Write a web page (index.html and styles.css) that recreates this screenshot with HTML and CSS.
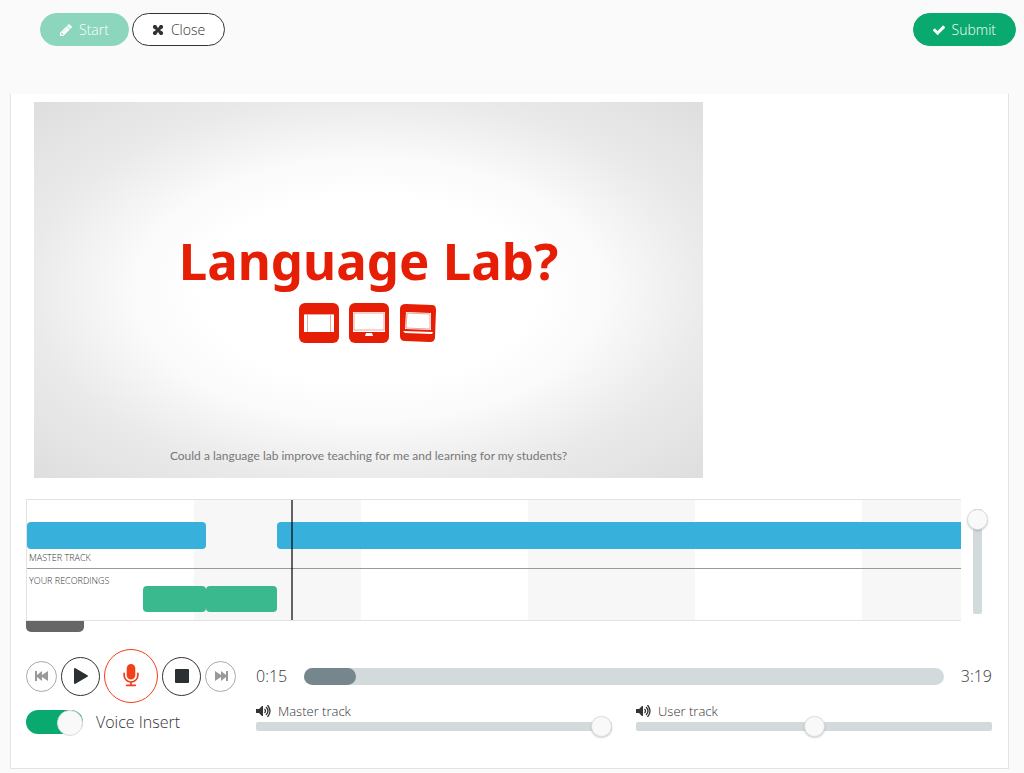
FILE: index.html
```html
<!DOCTYPE html>
<html lang="en">
<head>
  <meta charset="UTF-8">
  <meta name="viewport" content="width=device-width, initial-scale=1.0">
  <title>Language Lab</title>
  <link rel="stylesheet" href="styles.css">
</head>
<body>
  <header class="toolbar">
    <button type="button" class="btn btn-start" disabled>
      <svg class="icon" viewBox="0 0 1792 1792"><path d="M491 1536l91-91-235-235-91 91v107h128v128h107zm523-928q0-22-22-22-10 0-17 7l-542 542q-7 7-7 17 0 22 22 22 10 0 17-7l542-542q7-7 7-17zm-54-192l416 416-832 832h-416v-416zm683 96q0 53-37 90l-166 166-416-416 166-165q36-38 90-38 53 0 91 38l235 234q37 39 37 91z"/></svg>
      Start
    </button>
    <button type="button" class="btn btn-close">
      <svg class="icon" viewBox="0 0 14 14"><path d="M3 2h2l2 3 2-3h2l1 1v2L9 7l3 2v2l-1 1H9L7 9l-2 3H3l-1-1V9l3-2-3-2V3z"/></svg>
      Close
    </button>
    <button type="button" class="btn btn-submit">
      <svg class="icon" viewBox="0 0 1792 1792"><path d="M1671 566q0 40-28 68l-724 724-136 136q-28 28-68 28t-68-28l-136-136-362-362q-28-28-28-68t28-68l136-136q28-28 68-28t68 28l294 295 656-657q28-28 68-28t68 28l136 136q28 28 28 68z"/></svg>
      Submit
    </button>
  </header>

  <main class="panel">
    <section class="video">
      <h1>Language Lab?</h1>
      <div class="devices">
        <svg viewBox="0 0 40 40">
          <rect width="40" height="40" rx="6" fill="#e61e05"/>
          <rect x="5" y="11" width="30" height="18" fill="#fff"/>
          <path d="M8.5 11v18M31.5 11v18M5 11.5h30" stroke="#eba79d" fill="none"/>
        </svg>
        <svg viewBox="0 0 40 40">
          <rect width="40" height="40" rx="6" fill="#e61e05"/>
          <rect x="4" y="9" width="32" height="20" fill="#fff"/>
          <rect x="5" y="10" width="30" height="17" fill="none" stroke="#eba79d"/>
          <path d="M17 30h6l1 3h-8z" fill="#fff"/>
        </svg>
        <svg viewBox="0 0 40 40">
          <path d="M7 1l26 1q4 0 4 5l-1 27q0 5-5 5L6 38q-5 0-5-5V6q0-5 6-5z" fill="#e61e05"/>
          <path d="M7 9l25 1v17L6 26z" fill="#fff"/>
          <path d="M8 10l23 1v15L7 25z" fill="none" stroke="#eba79d"/>
          <path d="M4 28l30 1-1 2-27-1z" fill="#fff"/>
        </svg>
      </div>
      <p>Could a language lab improve teaching for me and learning for my students?</p>
    </section>

    <section class="timeline-row">
      <div class="timeline-box">
        <div class="timeline">
          <div class="lane lane-master">
            <div class="clips">
              <div class="clip" style="width: 19.2%"></div>
              <div class="clip clip-open" style="margin-left: 7.6%"></div>
            </div>
            <span class="lane-name">MASTER TRACK</span>
          </div>
          <div class="lane lane-user">
            <span class="lane-name">YOUR RECORDINGS</span>
            <div class="clips">
              <div class="clip" style="margin-left: 12.4%; width: 6.8%"></div>
              <div class="clip" style="width: 7.6%"></div>
            </div>
          </div>
          <div class="playhead" style="left: 28.3%"></div>
        </div>
        <div class="scroll-handle"></div>
      </div>
      <input type="range" class="zoom" min="0" max="100" value="100" aria-label="Zoom">
    </section>

    <section class="controls">
      <div class="transport">
        <button type="button" class="round small" aria-label="Rewind">
          <svg viewBox="0 0 14 12"><path d="M0 1h2v4l5-4v4l6-4v10L7 7v4L2 7v4H0z"/></svg>
        </button>
        <button type="button" class="round" aria-label="Play">
          <svg viewBox="0 0 16 16"><path d="M1 1q0-1 1-1l12 7q2 1 0 2L2 16q-1 0-1-1z"/></svg>
        </button>
        <button type="button" class="round record" aria-label="Record">
          <svg viewBox="0 0 1792 1792"><path d="M1472 704v128q0 221-147.5 384.5t-364.5 187.5v132h256q26 0 45 19t19 45-19 45-45 19h-640q-26 0-45-19t-19-45 19-45 45-19h256v-132q-217-24-364.5-187.5t-147.5-384.5v-128q0-26 19-45t45-19 45 19 19 45v128q0 185 131.5 316.5t316.5 131.5 316.5-131.5 131.5-316.5v-128q0-26 19-45t45-19 45 19 19 45zm-256-384v512q0 132-94 226t-226 94-226-94-94-226v-512q0-132 94-226t226-94 226 94 94 226z"/></svg>
        </button>
        <button type="button" class="round" aria-label="Stop">
          <svg viewBox="0 0 16 16"><rect x="1" y="1" width="14" height="14" rx="1"/></svg>
        </button>
        <button type="button" class="round small" aria-label="Forward">
          <svg viewBox="0 0 14 12"><path d="M14 1h-2v4L7 1v4L1 1v10l6-4v4l5-4v4h2z"/></svg>
        </button>
      </div>

      <div class="progress-row">
        <span>0:15</span>
        <progress max="199" value="16" aria-label="Position"></progress>
        <span>3:19</span>
      </div>

      <label class="toggle">
        <input type="checkbox" checked>
        Voice Insert
      </label>

      <div class="volumes">
        <div class="volume">
          <label for="master-volume">
            <svg viewBox="0 0 15 12"><path d="M0 4h3l3-3h1v10H6L3 8H0z"/><path d="M8.5 4q2 2 0 4M10 2q4 4 0 8M11.5 0q5 6 0 12" fill="none" stroke="#333" stroke-width="1.3"/></svg>
            Master track
          </label>
          <input type="range" id="master-volume" min="0" max="100" value="100">
        </div>
        <div class="volume">
          <label for="user-volume">
            <svg viewBox="0 0 15 12"><path d="M0 4h3l3-3h1v10H6L3 8H0z"/><path d="M8.5 4q2 2 0 4M10 2q4 4 0 8M11.5 0q5 6 0 12" fill="none" stroke="#333" stroke-width="1.3"/></svg>
            User track
          </label>
          <input type="range" id="user-volume" min="0" max="100" value="50">
        </div>
      </div>
    </section>
  </main>
</body>
</html>
```
FILE: styles.css
```css
* {
  box-sizing: border-box;
  margin: 0;
  padding: 0;
}
body {
  background-color: #fafafa;
  color: #333;
  font-family: "Open Sans", sans-serif;
  font-weight: 300;
}
button, input {
  font: inherit;
}

/* toolbar */
.toolbar {
  display: flex;
  gap: 3px;
  padding: 13px 8px 0 40px;
}
.btn {
  display: flex;
  align-items: center;
  gap: 6px;
  height: 33px;
  padding: 0 19px 0 18px;
  border: 1px solid #333;
  border-radius: 17px;
  background-color: #fff;
  color: #333;
  font-size: 14px;
  cursor: pointer;
}
.icon {
  width: 14px;
  height: 14px;
  fill: currentColor;
}
.btn-start {
  border-color: #8bd6bc;
  background-color: #8bd6bc;
  color: #fff;
}
.btn-submit {
  margin-left: auto;
  border-color: #0aa970;
  background-color: #0aa970;
  color: #fff;
}

.panel {
  margin: 48px 15px 4px 10px;
  padding: 8px 16px 34px 15px;
  border: 1px solid #e3e3e3;
  border-top: none;
  background-color: #fff;
}

/* video */
.video {
  display: flex;
  flex-direction: column;
  align-items: center;
  max-width: 669px;
  aspect-ratio: 16 / 9;
  margin-left: 8px;
  padding: 128px 0 14px;
  background: radial-gradient(ellipse at center, #fff 35%, #fafafa 50%, #eaeaea 72%, #dedede 100%);
}
.video h1 {
  color: #e61e05;
  font-family: "Noto Sans", sans-serif;
  font-size: 51px;
  font-weight: 700;
  line-height: 60px;
}
.video p {
  margin-top: auto;
  color: #777;
  font-family: Lato, sans-serif;
  font-size: 12px;
  font-weight: 400;
  line-height: 16px;
}
.devices {
  display: flex;
  gap: 10px;
  margin-top: 13px;
}
.devices svg {
  width: 40px;
  height: 40px;
}

/* timeline */
.timeline-row {
  display: flex;
  gap: 6px;
  margin-top: 21px;
}
.timeline-box {
  flex: 1;
}
.timeline {
  position: relative;
  border: 1px solid #e3e3e3;
  border-right: none;
  background: repeating-linear-gradient(to right, #fff 0, #fff 167px, #f7f7f7 167px, #f7f7f7 334px);
}
.lane-master {
  padding: 22px 0 4px;
  border-bottom: 1px solid #999;
}
.lane-user {
  padding: 6px 0 8px;
}
.lane-name {
  display: block;
  padding-left: 2px;
  font-size: 9px;
  line-height: 12px;
}
.lane-master .lane-name {
  margin-top: 3px;
}
.lane-user .lane-name {
  line-height: 11px;
}
.clips {
  display: flex;
}
.clip {
  height: 27px;
  border-radius: 4px;
  background-color: #37b0dc;
}
.clip-open {
  flex: 1;
  border-radius: 4px 0 0 4px;
}
.lane-user .clip {
  height: 26px;
  background-color: #3ab98e;
}
.playhead {
  position: absolute;
  top: 0;
  bottom: 0;
  width: 2px;
  background-color: rgba(0, 0, 0, 0.6);
}
.scroll-handle {
  width: 58px;
  height: 11px;
  border-radius: 0 0 5px 5px;
  background-color: #666;
}

/* sliders */
input[type="range"] {
  display: block;
  appearance: none;
  -webkit-appearance: none;
  background: none;
  cursor: pointer;
}
input[type="range"]::-webkit-slider-runnable-track {
  height: 9px;
  border-radius: 2px;
  background-color: #d3dadc;
}
input[type="range"]::-webkit-slider-thumb {
  -webkit-appearance: none;
  width: 21px;
  height: 21px;
  margin-top: -6px;
  border: 1px solid #dcdcdc;
  border-radius: 50%;
  background-color: #f9f9f9;
  box-shadow: 0 1px 2px rgba(0, 0, 0, 0.2);
}
.zoom {
  width: 21px;
  height: 105px;
  margin: 10px 4px 0 0;
  writing-mode: vertical-lr;
  direction: rtl;
}
input.zoom::-webkit-slider-runnable-track {
  width: 9px;
  height: 105px;
}
input.zoom::-webkit-slider-thumb {
  margin: 0 0 0 -6px;
}

/* controls */
.controls {
  display: grid;
  grid-template-columns: 210px 1fr;
  column-gap: 20px;
  align-items: center;
  margin-top: 17px;
}
.transport {
  display: flex;
  align-items: center;
  gap: 4px;
}
.round {
  display: flex;
  align-items: center;
  justify-content: center;
  width: 39px;
  height: 39px;
  border: 1px solid #333;
  border-radius: 50%;
  background-color: #fff;
  cursor: pointer;
}
.round svg {
  width: 16px;
  height: 16px;
  fill: #2b3033;
}
.small {
  width: 31px;
  height: 31px;
  border-color: #aaa;
}
.small svg {
  width: 14px;
  height: 12px;
  fill: #999;
}
.record {
  width: 54px;
  height: 54px;
  border-color: #f0401c;
}
.record svg {
  width: 24px;
  height: 24px;
  fill: #f0401c;
}
.progress-row {
  display: flex;
  align-items: center;
  gap: 17px;
  font-size: 16px;
}
progress {
  flex: 1;
  min-width: 0;
  height: 17px;
  appearance: none;
  -webkit-appearance: none;
  border: none;
}
progress::-webkit-progress-bar {
  border-radius: 9px;
  background-color: #d3dadc;
}
progress::-webkit-progress-value {
  border-radius: 9px;
  background-color: #75868d;
}
.toggle {
  display: flex;
  align-items: center;
  gap: 13px;
  padding-top: 6px;
  font-size: 16px;
  cursor: pointer;
}
.toggle input {
  width: 57px;
  height: 24px;
  appearance: none;
  -webkit-appearance: none;
  border-radius: 12px;
  background-color: #ccc;
}
.toggle input::before {
  content: "";
  display: block;
  width: 24px;
  height: 24px;
  border: 1px solid #dcdcdc;
  border-radius: 50%;
  background-color: #f9f9f9;
}
.toggle input:checked {
  background-color: #0aa970;
}
.toggle input:checked::before {
  margin-left: auto;
}
.volumes {
  display: grid;
  grid-template-columns: 1fr 1fr;
  gap: 24px;
}
.volume label {
  display: flex;
  align-items: center;
  gap: 7px;
  font-size: 13px;
  line-height: 16px;
}
.volume svg {
  width: 15px;
  height: 12px;
  fill: #333;
}
.volume input {
  width: 100%;
  height: 15px;
}
```
